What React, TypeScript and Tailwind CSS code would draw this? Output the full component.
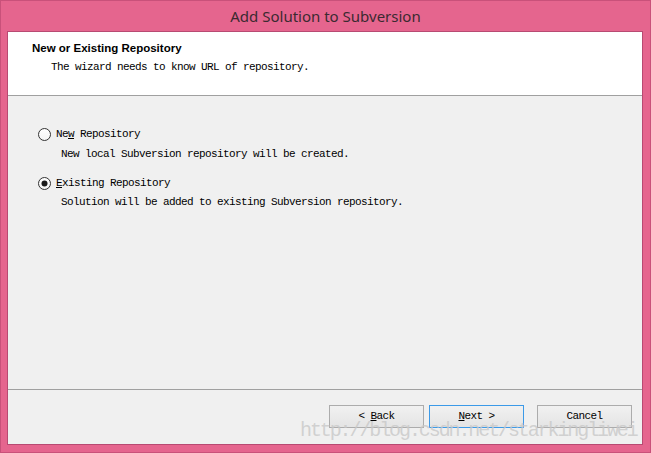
const mono = { fontFamily: '"Liberation Mono", "DejaVu Sans Mono", monospace' };

const Radio = ({ checked }: { checked?: boolean }) => (
  <svg width="13" height="13" viewBox="0 0 13 13" className="shrink-0">
    <defs>
      <linearGradient id={checked ? "rg1" : "rg0"} x1="0" y1="0" x2="0" y2="1">
        <stop offset="0" stopColor="#ffffff" />
        <stop offset="1" stopColor="#f4f4f4" />
      </linearGradient>
    </defs>
    <circle cx="6.5" cy="6.5" r="6" fill={`url(#${checked ? "rg1" : "rg0"})`} stroke="#333333" strokeWidth="1" />
    {checked && <circle cx="6.5" cy="6.5" r="3" fill="#1a1a1a" />}
  </svg>
);

const WinButton = ({ children, focused }: { children: React.ReactNode; focused?: boolean }) => (
  <button
    className={`h-[23px] w-[95px] flex items-center justify-center border text-[11px] tracking-[-0.6px] text-black bg-gradient-to-b from-[#f1f1f1] to-[#e4e4e4] ${
      focused ? "border-[#3c9ae8]" : "border-[#acacac]"
    }`}
    style={mono}
  >
    {children}
  </button>
);

export default function App() {
  return (
    <div className="relative w-[651px] h-[453px] bg-[#e5658e] border border-[#c9517a] flex flex-col overflow-hidden">
      <div
        className="h-[30px] flex items-center justify-center text-[15px] text-[#3b2a31]"
        style={{ fontFamily: '"Noto Sans", "Open Sans", sans-serif' }}
      >
        Add Solution to Subversion
      </div>
      <div className="flex-1 ml-[6px] mr-[7px] mb-[7px] flex flex-col bg-[#f0f0f0] border border-[#b84a72]">
        <div className="h-[64px] bg-white border-b border-[#a0a0a0] pl-[24px] pt-[9px]">
          <div
            className="text-[11.5px] font-bold leading-[14px] text-black"
            style={{ fontFamily: '"Liberation Sans", Arial, sans-serif' }}
          >
            New or Existing Repository
          </div>
          <div className="mt-[5px] ml-[19px] text-[11px] leading-[14px] tracking-[-0.6px] text-black" style={mono}>
            The wizard needs to know URL of repository.
          </div>
        </div>
        <div className="flex-1 pl-[30px] pt-[30px] text-[11px] tracking-[-0.6px] text-black" style={mono}>
          <div className="flex items-center gap-[5px] h-[16px]">
            <Radio />
            <span>
              Ne<u>w</u> Repository
            </span>
          </div>
          <div className="ml-[23px] mt-[4px] h-[16px] leading-[16px]">New local Subversion repository will be created.</div>
          <div className="flex items-center gap-[5px] h-[16px] mt-[13px]">
            <Radio checked />
            <span>
              <u>E</u>xisting Repository
            </span>
          </div>
          <div className="ml-[23px] mt-[3px] h-[16px] leading-[16px]">
            Solution will be added to existing Subversion repository.
          </div>
        </div>
        <div className="h-[55px] border-t border-[#a0a0a0] flex justify-end items-start pt-[15px] pr-[10px]">
          <WinButton>
            &lt; <u className="ml-[6px]">B</u>ack
          </WinButton>
          <div className="ml-[5px]">
            <WinButton focused>
              <u>N</u>ext <span className="ml-[6px]">&gt;</span>
            </WinButton>
          </div>
          <div className="ml-[13px]">
            <WinButton>Cancel</WinButton>
          </div>
        </div>
      </div>
      <div
        className="absolute left-[299px] top-[419px] text-[20px] leading-[22px] tracking-[-2.1px] text-[#c8c8c8]/80 pointer-events-none whitespace-nowrap"
        style={mono}
      >
        http://blog.csdn.net/starkingliwei
      </div>
    </div>
  );
}
